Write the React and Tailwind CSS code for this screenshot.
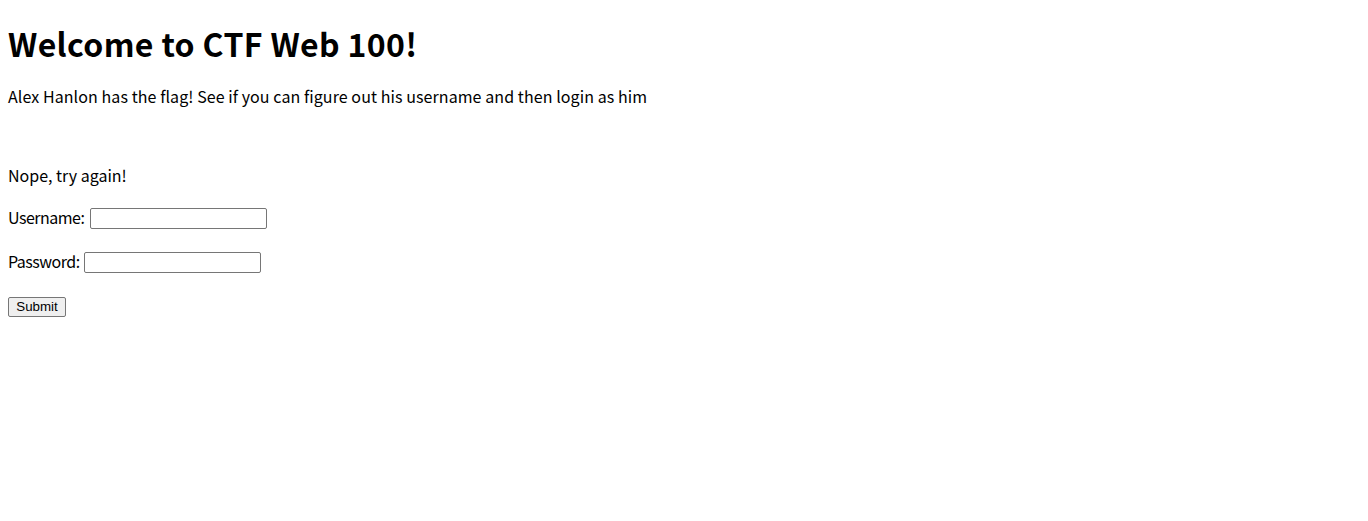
export default function App() {
  return (
    <div className="min-h-[521px] bg-white px-2 pt-[22px] text-black">
      <div className="font-['Noto_Sans_CJK_KR','Noto_Sans',sans-serif]">
        <h1 className="h-[42px] text-[32px] font-bold leading-[42px] tracking-[0.35px]">Welcome to CTF Web 100!</h1>
        <p className="mt-[20px] h-6 text-[16px] leading-6 tracking-[0.08px]">
          Alex Hanlon has the flag! See if you can figure out his username and then login as him
        </p>
        <p className="mt-[55px] h-6 text-[16px] leading-6">Nope, try again!</p>
        <div className="mt-[21px] flex h-[21px] items-center text-[16px]">
          <span className="w-[82px] whitespace-nowrap pb-[3px] tracking-[-0.5px]">Username:</span>
          <input type="text" className="h-[21px] w-[177px] rounded-[2px] border border-[#767676] bg-white" />
        </div>
        <div className="mt-[23px] flex h-[21px] items-center text-[16px]">
          <span className="w-[76px] whitespace-nowrap pb-[3px] tracking-[-0.5px]">Password:</span>
          <input type="password" className="h-[21px] w-[177px] rounded-[2px] border border-[#767676] bg-white" />
        </div>
        <div className="mt-[24px] flex">
          <button className="h-[20px] w-[58px] rounded-[2px] border border-[#767676] bg-[#efefef] font-['Liberation_Sans',Arial,sans-serif] text-[13.333px] leading-[18px]">
            Submit
          </button>
        </div>
      </div>
    </div>
  );
}
